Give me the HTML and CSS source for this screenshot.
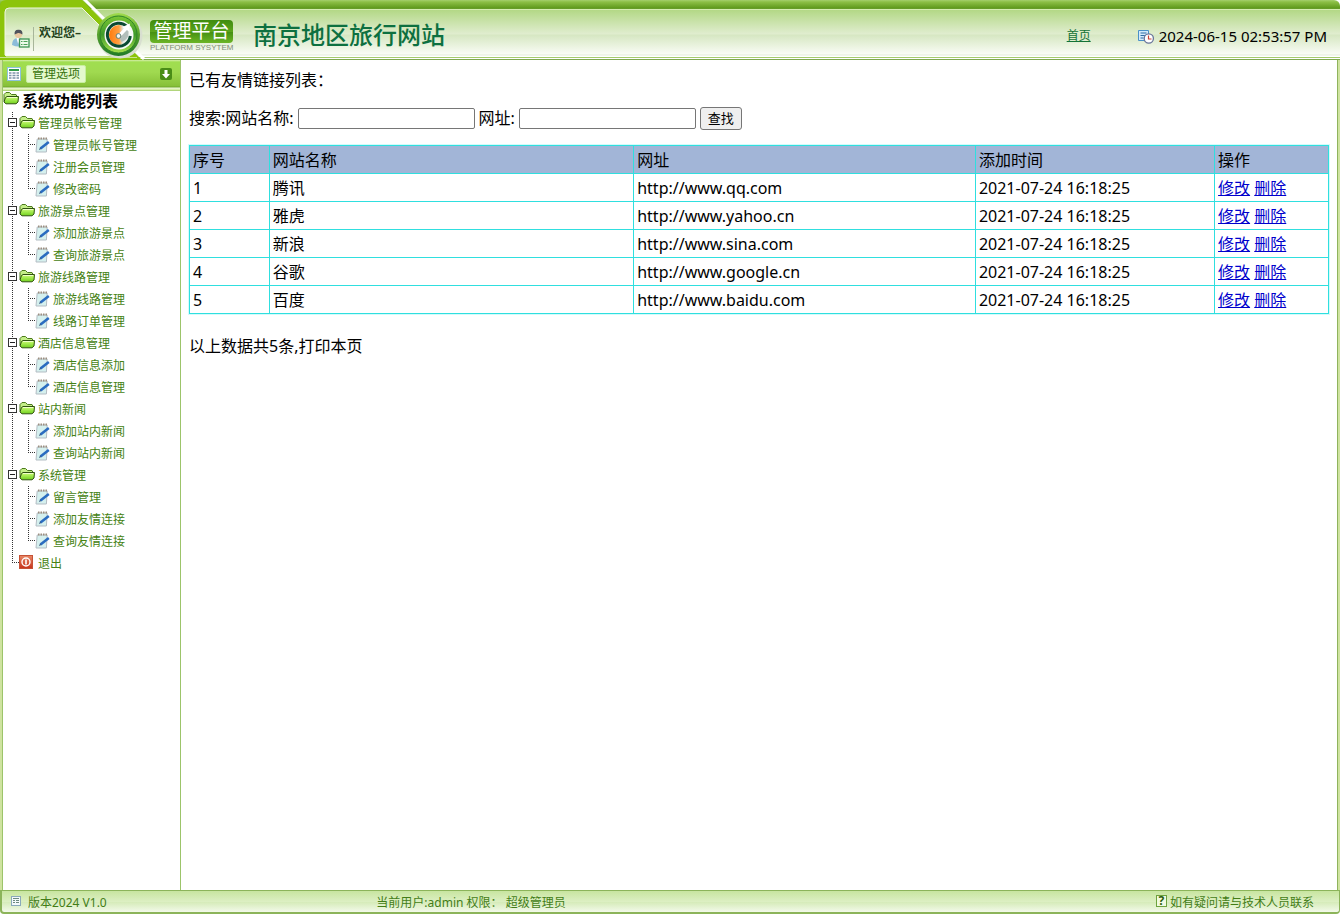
FILE: index.html
```
<!DOCTYPE html>
<html lang="zh-CN">
<head>
  <meta charset="UTF-8" />
  <title>南京地区旅行网站</title>
  <meta name="viewport" content="width=device-width, initial-scale=1.0" />
  <link rel="stylesheet" href="styles.css">
</head>
<body>

  <!-- Shared icons -->
  <svg class="sprite" width="0" height="0">
    <defs>
      <linearGradient id="gFolder" x1="0" y1="0" x2="0" y2="1">
        <stop offset="0" stop-color="#d2ff7c" /><stop offset="1" stop-color="#6fd01c" />
      </linearGradient>
      <linearGradient id="gExit" x1="0" y1="0" x2="0" y2="1">
        <stop offset="0" stop-color="#e88866" /><stop offset="1" stop-color="#c5331b" />
      </linearGradient>
      <symbol id="folder" viewBox="0 0 16 14">
        <path d="M1 10.500V3.500L3 1.500h3.500L8.500 3.500h4.500l1 2" fill="#c4ee88" stroke="#4c7a1c" />
        <path d="M1 11L2.500 6.500 4 5.500h11.500L15 11l-2 1.800H3z" fill="url(#gFolder)" stroke="#2f5210" />
        <path d="M4 6.500h10" stroke="#eeffc8" />
      </symbol>
      <symbol id="note" viewBox="0 0 15 16">
        <path d="M2.200 2h10l-.8 13H1z" fill="#d5f0ee" stroke="#b4bdc4" />
        <path d="M3 1.500h9" stroke="#9c8f80" stroke-width="2" stroke-dasharray="1.500 1" />
        <path d="M5.500 11.500L13.800 5" stroke="#2a6cc0" stroke-width="2.600" />
        <path d="M4 13l2.200-1-1.200-1.300z" fill="#22406c" />
      </symbol>
      <symbol id="exit" viewBox="0 0 14 14">
        <rect x=".5" y=".5" width="13" height="13" fill="url(#gExit)" stroke="#c65236" />
        <circle cx="7" cy="7" r="4" fill="none" stroke="#fff" stroke-width="1.400" />
        <path d="M7 4.500v5" stroke="#fff" stroke-width="1.600" />
      </symbol>
    </defs>
  </svg>

  <header class="header">
    <svg class="header-art" width="250" height="60" viewBox="0 0 250 60" aria-hidden="true">
      <defs>
        <linearGradient id="gPanel" x1="0" y1="0" x2="0" y2="1">
          <stop offset="0" stop-color="#b5d98a" /><stop offset=".55" stop-color="#e6f1d6" />
          <stop offset=".56" stop-color="#dcebc6" /><stop offset="1" stop-color="#fdfefb" />
        </linearGradient>
        <linearGradient id="gRing" x1="0" y1="0" x2="0" y2="1">
          <stop offset="0" stop-color="#a0dc4c" /><stop offset=".5" stop-color="#55a02c" />
          <stop offset="1" stop-color="#1f7a28" />
        </linearGradient>
        <linearGradient id="gGloss" x1="0" y1="0" x2="0" y2="1">
          <stop offset="0" stop-color="#7cc834" /><stop offset=".5" stop-color="#3f9a2a" />
          <stop offset="1" stop-color="#a6e04c" />
        </linearGradient>
        <linearGradient id="gDisc" x1="0" y1="0" x2="1" y2="0">
          <stop offset="0" stop-color="#ff7a0c" /><stop offset=".5" stop-color="#ffa042" />
          <stop offset=".7" stop-color="#e4e9e6" /><stop offset="1" stop-color="#f8faf8" />
        </linearGradient>
      </defs>
      <path d="M0 60V6Q0 0 6 0H82L142 60z" fill="#8cc40a" />
      <path d="M84 -1L144 59" stroke="#fff" stroke-width="3" />
      <path d="M5 55V12Q5 8 9 8H82L130 56H6z" fill="url(#gPanel)" stroke="#f1f8e4" />
      <path d="M0 57.500h137" stroke="#c8e48e" />
      <circle cx="120" cy="36" r="22.500" fill="#d8dfd0" />
      <circle cx="118.500" cy="34.500" r="21.500" fill="url(#gRing)" />
      <circle cx="118.500" cy="34.500" r="18.500" fill="url(#gGloss)" stroke="#2e8527" />
      <circle cx="119" cy="35" r="14.500" fill="#f7faf5" />
      <circle cx="119" cy="35" r="10" fill="url(#gDisc)" />
      <path d="M127 26.500A11.500 11.500 0 1 0 130.300 36" fill="none" stroke="#0b4a33" stroke-width="3" />
      <path d="M117 35.500l7-7-1.500-1.500 7.500-3.500-1.500 8-1.500-1.500-7.500 8z" fill="#fff" />
      <path d="M119.500 38l7.500-8 1.500 1.500q1 8-7 10.500z" fill="#b3bfbb" />
      <circle cx="118.500" cy="36" r="2.400" fill="#f3f5f2" stroke="#617d74" />
    </svg>

    <div class="welcome">
      <svg width="18" height="20" viewBox="0 0 18 20" aria-hidden="true">
        <path d="M0 16q0-6 5-7h3q4 1 4 7-5 3-12 0z" fill="#8cbcd9" />
        <path d="M4.500 9h3.500l-1.800 6z" fill="#fff" />
        <circle cx="6.500" cy="5.300" r="3.700" fill="#eac7a0" />
        <path d="M2.600 5.500Q2 .5 6.500.8 11 .5 10.400 5.500 8 3.500 6 4z" fill="#50545c" />
        <rect x="7.500" y="10" width="9.500" height="8" fill="#eef9ea" stroke="#3e9453" stroke-width="1.300" />
        <path d="M9 12.500h1.500M9 15.500h1.500M11.500 12.500h4M11.500 15.500h4" stroke="#4da257" />
      </svg>
      <span class="welcome-text">欢迎您–</span>
    </div>

    <div class="platform">
      <span class="platform-name">管理平台</span>
      <span class="platform-sub">PLATFORM SYSYTEM</span>
    </div>

    <h1 class="site-title">南京地区旅行网站</h1>

    <a class="home-link" href="#">首页</a>

    <div class="clock">
      <svg width="16" height="15" viewBox="0 0 16 15" aria-hidden="true">
        <path d="M.5 1.500h10v10H.5z" fill="#d3eafb" stroke="#4a90c8" />
        <path d="M2.500 4h6M2.500 6.500h6M2.500 9h3" stroke="#2d6ca3" />
        <circle cx="10.800" cy="9.500" r="4.600" fill="#fff" stroke="#68749a" stroke-width="1.300" />
        <path d="M10.500 6.500v3.500h3" fill="none" stroke="#c94136" stroke-width="1.200" />
      </svg>
      <span>2024-06-15 02:53:57 PM</span>
    </div>
  </header>

  <div class="container">
    <aside class="sidebar">
      <div class="menu-bar">
        <svg width="14" height="14" viewBox="0 0 14 14" aria-hidden="true">
          <rect x=".5" y=".5" width="13" height="13" fill="#fff" stroke="#8ec3dc" />
          <path d="M2 3h10" stroke="#2f9a48" stroke-width="2" />
          <path d="M2 6h10M2 8.500h10M2 11h10" stroke="#7c93a8" stroke-width="1.500" />
          <path d="M5 4v9M9 4v9" stroke="#fff" />
        </svg>
        <span class="menu-title">管理选项</span>
        <button class="menu-toggle" type="button" aria-label="收起">
          <svg width="12" height="12" viewBox="0 0 12 12"><path d="M4.500 2h3v4H10l-4 4.500L2 6h2.500z" fill="#fff" /></svg>
        </button>
      </div>

      <h2 class="tree-root"><svg width="16" height="14"><use href="#folder" /></svg>系统功能列表</h2>

      <ul class="tree">
        <li>
          <div class="node"><button class="fold" type="button" aria-label="折叠"></button><svg width="16" height="14"><use href="#folder" /></svg><a href="#">管理员帐号管理</a></div>
          <ul class="leaves">
            <li><svg width="15" height="16"><use href="#note" /></svg><a href="#">管理员帐号管理</a></li>
            <li><svg width="15" height="16"><use href="#note" /></svg><a href="#">注册会员管理</a></li>
            <li><svg width="15" height="16"><use href="#note" /></svg><a href="#">修改密码</a></li>
          </ul>
        </li>
        <li>
          <div class="node"><button class="fold" type="button" aria-label="折叠"></button><svg width="16" height="14"><use href="#folder" /></svg><a href="#">旅游景点管理</a></div>
          <ul class="leaves">
            <li><svg width="15" height="16"><use href="#note" /></svg><a href="#">添加旅游景点</a></li>
            <li><svg width="15" height="16"><use href="#note" /></svg><a href="#">查询旅游景点</a></li>
          </ul>
        </li>
        <li>
          <div class="node"><button class="fold" type="button" aria-label="折叠"></button><svg width="16" height="14"><use href="#folder" /></svg><a href="#">旅游线路管理</a></div>
          <ul class="leaves">
            <li><svg width="15" height="16"><use href="#note" /></svg><a href="#">旅游线路管理</a></li>
            <li><svg width="15" height="16"><use href="#note" /></svg><a href="#">线路订单管理</a></li>
          </ul>
        </li>
        <li>
          <div class="node"><button class="fold" type="button" aria-label="折叠"></button><svg width="16" height="14"><use href="#folder" /></svg><a href="#">酒店信息管理</a></div>
          <ul class="leaves">
            <li><svg width="15" height="16"><use href="#note" /></svg><a href="#">酒店信息添加</a></li>
            <li><svg width="15" height="16"><use href="#note" /></svg><a href="#">酒店信息管理</a></li>
          </ul>
        </li>
        <li>
          <div class="node"><button class="fold" type="button" aria-label="折叠"></button><svg width="16" height="14"><use href="#folder" /></svg><a href="#">站内新闻</a></div>
          <ul class="leaves">
            <li><svg width="15" height="16"><use href="#note" /></svg><a href="#">添加站内新闻</a></li>
            <li><svg width="15" height="16"><use href="#note" /></svg><a href="#">查询站内新闻</a></li>
          </ul>
        </li>
        <li>
          <div class="node"><button class="fold" type="button" aria-label="折叠"></button><svg width="16" height="14"><use href="#folder" /></svg><a href="#">系统管理</a></div>
          <ul class="leaves">
            <li><svg width="15" height="16"><use href="#note" /></svg><a href="#">留言管理</a></li>
            <li><svg width="15" height="16"><use href="#note" /></svg><a href="#">添加友情连接</a></li>
            <li><svg width="15" height="16"><use href="#note" /></svg><a href="#">查询友情连接</a></li>
          </ul>
        </li>
        <li class="last">
          <div class="node"><svg width="14" height="14"><use href="#exit" /></svg><a href="#">退出</a></div>
        </li>
      </ul>
    </aside>

    <main class="content">
      <p class="caption">已有友情链接列表：</p>

      <form class="search">
        <label for="site-name">搜索:网站名称:</label>
        <input type="text" id="site-name" />
        <label for="site-url">网址:</label>
        <input type="text" id="site-url" />
        <button class="btn" type="button">查找</button>
      </form>

      <table class="links">
        <colgroup>
          <col class="c-no"><col class="c-name"><col class="c-url"><col class="c-time"><col class="c-ops">
        </colgroup>
        <thead>
          <tr><th>序号</th><th>网站名称</th><th>网址</th><th>添加时间</th><th>操作</th></tr>
        </thead>
        <tbody>
          <tr><td>1</td><td>腾讯</td><td>http://www.qq.com</td><td>2021-07-24 16:18:25</td><td><a href="#">修改</a> <a href="#">删除</a></td></tr>
          <tr><td>2</td><td>雅虎</td><td>http://www.yahoo.cn</td><td>2021-07-24 16:18:25</td><td><a href="#">修改</a> <a href="#">删除</a></td></tr>
          <tr><td>3</td><td>新浪</td><td>http://www.sina.com</td><td>2021-07-24 16:18:25</td><td><a href="#">修改</a> <a href="#">删除</a></td></tr>
          <tr><td>4</td><td>谷歌</td><td>http://www.google.cn</td><td>2021-07-24 16:18:25</td><td><a href="#">修改</a> <a href="#">删除</a></td></tr>
          <tr><td>5</td><td>百度</td><td>http://www.baidu.com</td><td>2021-07-24 16:18:25</td><td><a href="#">修改</a> <a href="#">删除</a></td></tr>
        </tbody>
      </table>

      <p class="summary">以上数据共5条,打印本页</p>
    </main>
  </div>

  <footer class="footer">
    <div class="foot-item">
      <svg width="10" height="10" viewBox="0 0 10 10" aria-hidden="true">
        <rect x=".5" y=".5" width="9" height="9" fill="#f4f9fb" stroke="#8aa9bb" />
        <path d="M2 2.500h6M2 4.500h6M2 6.500h6" stroke="#6c8a80" />
        <path d="M4.500 3v5" stroke="#f4f9fb" />
      </svg>
      <span>版本2024 V1.0</span>
    </div>
    <div>当前用户:admin 权限： 超级管理员</div>
    <div class="foot-help">
      <span class="help">?</span>
      <span>如有疑问请与技术人员联系</span>
    </div>
  </footer>

</body>
</html>
```
FILE: styles.css
```
* {
  box-sizing: border-box;
}

body {
  margin: 0;
  min-height: 100vh;
  display: flex;
  flex-direction: column;
  font-family: "Noto Sans", "Noto Sans CJK SC", sans-serif;
  font-size: 16px;
  line-height: 24px;
  color: #000;
  background: #fff;
}

svg {
  display: block;
  flex: none;
}

.sprite {
  position: absolute;
}

/* Header */
.header {
  position: relative;
  height: 60px;
  display: flex;
  align-items: center;
  padding: 12px 13px 0 12px;
  border-radius: 0 6px 0 0;
  background:
    linear-gradient(#a5d06c 0, #8cbf45 2px, #5f9a1c 8px, #6c9f33 9px, #d5ecb0 9px, #d5ecb0 10px,
      #b3d886 10px, #e0edcf 34px, #d6e7c2 35px, #f9fcf5 54px, #e3ecd8 55px,
      #fff 56px, #fff 57px, #a3ca6c 57px, #a3ca6c 58px, #fff 58px, #fff 59px, #7fa84e 59px);
}

.header-art {
  position: absolute;
  left: 0;
  top: 0;
}

.welcome,
.platform {
  position: relative;
  flex: none;
}

.welcome {
  width: 138px;
  display: flex;
  align-items: center;
  gap: 3px;
  padding-top: 6px;
}

.welcome-text {
  border-left: 1px solid #a8b69a;
  padding: 0 0 12px 5px;
  font-size: 12px;
  font-weight: 700;
  line-height: 12px;
  color: #23431c;
}

.platform {
  width: 83px;
  text-align: center;
}

.platform-name {
  display: block;
  height: 23px;
  border-radius: 4px;
  background: linear-gradient(#3f8c0f, #5ba41c 50%, #459012 52%, #6bb526);
  color: #fff;
  font-size: 19px;
  line-height: 23px;
}

.platform-sub {
  display: block;
  font-family: "Liberation Sans", sans-serif;
  font-size: 8px;
  line-height: 10px;
  white-space: nowrap;
  color: #7f8c76;
}

.site-title {
  margin: 0 auto 0 20px;
  font-family: "Liberation Serif", "Noto Sans CJK SC", serif;
  font-size: 24px;
  font-weight: 500;
  line-height: 32px;
  color: #0d7040;
}

.home-link {
  margin-right: 47px;
  font-size: 12px;
  line-height: 22px;
  color: #137236;
}

.clock {
  display: flex;
  align-items: center;
  gap: 5px;
  font-size: 15px;
}

/* Page frame */
.container {
  flex: 1;
  display: flex;
  border: solid #cfe3a0;
  border-width: 0 2px;
}

.sidebar {
  flex: none;
  width: 179px;
  border: solid #9cc46a;
  border-width: 0 1px;
}

.menu-bar {
  height: 31px;
  display: flex;
  align-items: center;
  gap: 5px;
  padding: 0 8px 4px 4px;
  background: linear-gradient(#d5eda8 0, #a0de50 2px, #a0da50 12px, #87c038 26px, #6ea52a 27px,
    #f4fbe4 28px, #d6efa6 29px, #d6efa6 30px, #8dbb52 31px);
}

.menu-title {
  border: 1px solid #c8efa0;
  border-radius: 2px;
  padding: 0 5px;
  background: #e4f9cc;
  color: #37730e;
  font-size: 12px;
  line-height: 16px;
}

.menu-toggle {
  margin-left: auto;
  padding: 0;
  border: 0;
  border-radius: 2px;
  background: #4a8d17;
}

/* Function tree */
.tree-root {
  display: flex;
  align-items: center;
  gap: 3px;
  margin: 0;
  height: 21px;
  font-size: 16px;
  font-weight: 700;
  line-height: 21px;
}

.tree-root svg {
  align-self: flex-start;
}

.tree,
.leaves {
  list-style: none;
  margin: 0;
  padding: 0;
  font-size: 12px;
  line-height: 24px;
}

.tree a {
  color: #458213;
  text-decoration: none;
}

.tree > li {
  background: repeating-linear-gradient(#333 0, #333 1px, transparent 1px, transparent 2px) 9px 0 / 1px 100% no-repeat;
}

.tree > .last {
  background:
    repeating-linear-gradient(#333 0, #333 1px, transparent 1px, transparent 2px) 9px 0 / 1px 10px no-repeat,
    repeating-linear-gradient(90deg, #333 0, #333 1px, transparent 1px, transparent 2px) 9px 10px / 7px 1px no-repeat;
}

.node {
  display: flex;
  height: 22px;
  gap: 3px;
  padding-left: 5px;
}

.node svg {
  margin-top: 3px;
}

.last .node {
  gap: 5px;
  padding-left: 16px;
}

.fold {
  width: 9px;
  height: 9px;
  margin: 6px 0 0;
  padding: 0;
  border: 1px solid #333;
  background: linear-gradient(#222, #222) center / 5px 1px no-repeat #fff;
}

.fold + svg {
  margin-left: -1px;
}

.leaves li {
  display: flex;
  height: 22px;
  gap: 3px;
  padding-left: 32px;
  background:
    repeating-linear-gradient(#333 0, #333 1px, transparent 1px, transparent 2px) 25px 0 / 1px 100% no-repeat,
    repeating-linear-gradient(90deg, #333 0, #333 1px, transparent 1px, transparent 2px) 25px 10px / 7px 1px no-repeat;
}

.leaves li:last-child {
  background-size: 1px 10px, 7px 1px;
}

.leaves svg {
  margin-top: 3px;
}

/* Main area */
.content {
  flex: 1;
  padding: 8px 8px 0;
  border-right: 1px solid #8fb35c;
}

.caption {
  margin: 0 0 14px;
}

.search {
  display: flex;
  align-items: center;
  gap: 4px;
  margin-bottom: 15px;
}

.search input {
  width: 177px;
  height: 21px;
  border: 1px solid #767676;
  border-radius: 2px;
  padding: 1px 2px;
}

.btn {
  width: 42px;
  height: 23px;
  padding: 0;
  border: 1px solid #767676;
  border-radius: 3px;
  background: #efefef;
  font-family: inherit;
  font-size: 13px;
  line-height: 20px;
}

.links {
  width: 100%;
  table-layout: fixed;
  border-collapse: collapse;
  outline: 1px solid #d4fbfb;
}

.c-no { width: 7%; }
.c-name { width: 32%; }
.c-url { width: 30%; }
.c-time { width: 21%; }
.c-ops { width: 10%; }

.links th,
.links td {
  height: 28px;
  padding: 0 3px;
  border: 1px solid #2fdfdf;
  text-align: left;
  font-weight: 400;
}

.links th {
  background: #a2b5d7;
}

.links a {
  color: #0000cc;
}

.summary {
  margin: 20px 0 0;
}

/* Footer */
.footer {
  display: grid;
  grid-template-columns: 28% 1fr auto;
  height: 24px;
  border: solid #8cb45a;
  border-width: 1px 1px 2px 2px;
  border-radius: 0 0 4px 4px;
  background: linear-gradient(#c8e5a0, #dcefc2 50%, #d5ebb8 52%, #f3faea);
  color: #437d17;
  font-size: 12px;
  line-height: 24px;
}

.foot-item {
  display: flex;
  gap: 7px;
  padding-left: 9px;
}

.foot-item svg {
  margin-top: 5px;
}

.foot-help {
  display: flex;
  gap: 3px;
  padding-right: 25px;
}

.help {
  width: 11px;
  height: 12px;
  margin-top: 4px;
  border: 1px solid #6da23d;
  background: #f0fae0;
  color: #2c5c0a;
  font-weight: 700;
  line-height: 10px;
  text-align: center;
}
```
